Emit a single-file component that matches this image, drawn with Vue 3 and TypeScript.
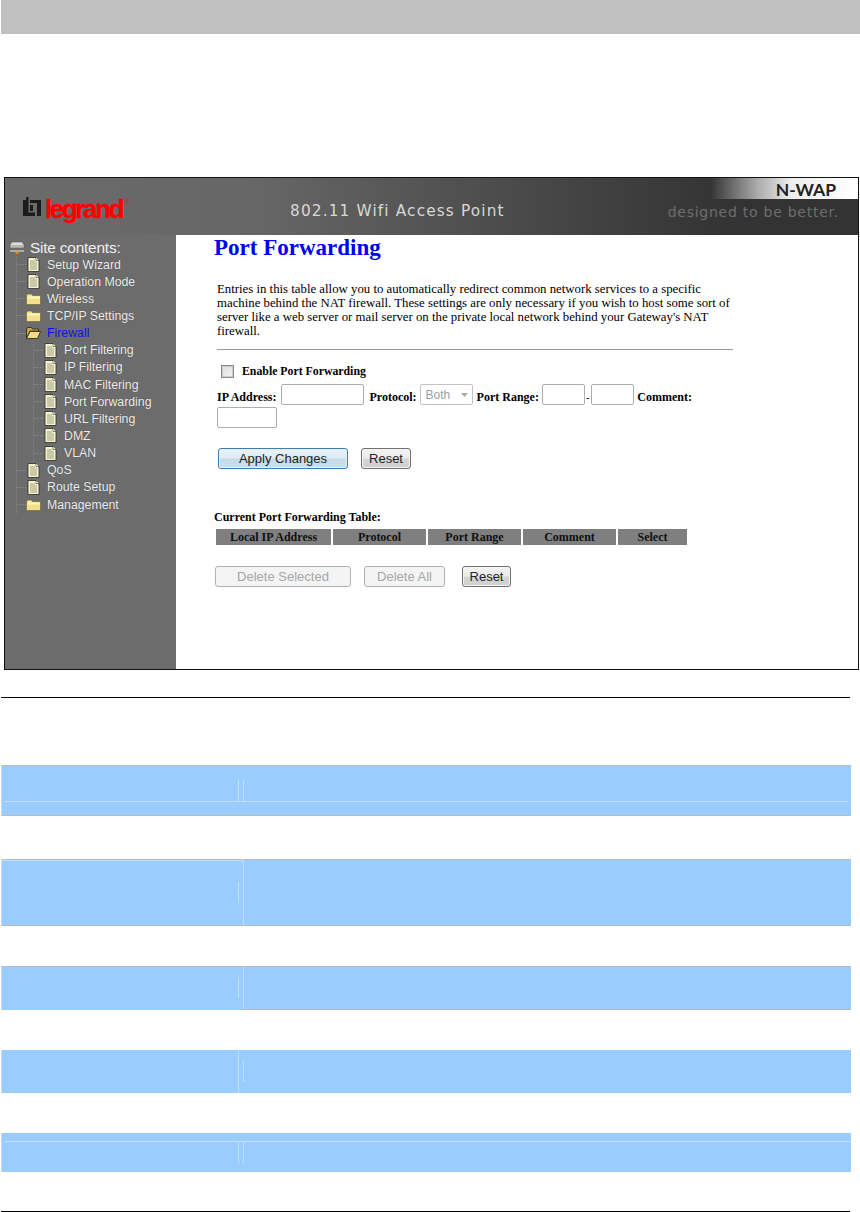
<script setup lang="ts">
interface NavItem { label: string; icon: 'doc' | 'folder' | 'open'; sub?: boolean; active?: boolean }
const nav: NavItem[] = [
  { label: 'Setup Wizard', icon: 'doc' },
  { label: 'Operation Mode', icon: 'doc' },
  { label: 'Wireless', icon: 'folder' },
  { label: 'TCP/IP Settings', icon: 'folder' },
  { label: 'Firewall', icon: 'open', active: true },
  { label: 'Port Filtering', icon: 'doc', sub: true },
  { label: 'IP Filtering', icon: 'doc', sub: true },
  { label: 'MAC Filtering', icon: 'doc', sub: true },
  { label: 'Port Forwarding', icon: 'doc', sub: true },
  { label: 'URL Filtering', icon: 'doc', sub: true },
  { label: 'DMZ', icon: 'doc', sub: true },
  { label: 'VLAN', icon: 'doc', sub: true },
  { label: 'QoS', icon: 'doc' },
  { label: 'Route Setup', icon: 'doc' },
  { label: 'Management', icon: 'folder' },
]
const cols = [
  { label: 'Local IP Address', w: 115 },
  { label: 'Protocol', w: 93 },
  { label: 'Port Range', w: 93 },
  { label: 'Comment', w: 93 },
  { label: 'Select', w: 69 },
]
interface Band { cls: string; lines: string[] }
const bands: Band[] = [
  { cls: 'b1', lines: ['h1', 'v1a', 'v1b'] },
  { cls: 'b2', lines: ['h2', 'v2a', 'v2b'] },
  { cls: 'b3', lines: ['v3a', 'v3b', 'u3'] },
  { cls: 'b4', lines: ['v4a', 'v4b'] },
  { cls: 'b5', lines: ['h5', 'v5a', 'v5b'] },
]
</script>

<template>
  <div class="page">
    <div class="topbar"></div>

    <div class="shot">
      <header class="head">
        <div class="logo">
          <svg class="mark" width="18" height="20" viewBox="0 0 18 20">
            <path d="M0 3h3V0h2.500v15.500H12V19H0z" fill="#1c1c1c" />
            <path d="M7 3h11v16h-4V6H7z" fill="#1c1c1c" />
            <path d="M7 8h3v6H7z" fill="#1c1c1c" />
          </svg>
          <span class="brand">legrand</span>
          <span class="reg">®</span>
        </div>
        <div class="product">802.11 Wifi Access Point</div>
        <div class="right">
          <div class="nwap">N-WAP</div>
          <div class="tag">designed to be better.</div>
        </div>
      </header>

      <div class="body">
        <aside class="side">
          <div class="site">
            <svg width="16" height="14" viewBox="0 0 16 14">
              <path d="M1 4l2-3h10l2 3v3H1z" fill="#dcdcd4" stroke="#555" stroke-width=".5" />
              <path d="M1 5h14M1 7h14" stroke="#777" stroke-width=".7" />
              <path d="M1 10h14" stroke="#d8d8c8" stroke-width="1.200" />
              <circle cx="8" cy="11.500" r="1.500" fill="#e89020" />
            </svg>
            <span>Site contents:</span>
          </div>
          <ul class="tree">
            <li v-for="n in nav" :key="n.label" class="node" :class="{ sub: n.sub }">
              <span class="dash"></span>
              <svg v-if="n.icon === 'doc'" class="ico" width="13" height="15" viewBox="0 0 13 15">
                <path d="M1 .5h8l3 3v11H1z" fill="#f6f2cc" stroke="#2a2a2a" stroke-width=".8" />
                <path d="M3 4h5M3 6h7M3 8h7M3 10h7M3 12h7" stroke="#8a8a70" stroke-width=".8" />
                <path d="M9 .5v3h3" fill="#fff" stroke="#333" stroke-width=".6" />
              </svg>
              <svg v-else-if="n.icon === 'folder'" class="ico" width="15" height="12" viewBox="0 0 15 12">
                <path d="M.5 2.500l1-1.500h4l1 1.500h8v9H.5z" fill="#f3df8c" stroke="#6a5c2c" stroke-width=".6" />
                <path d="M1.500 3.500h12v2h-12z" fill="#fcf4c4" />
              </svg>
              <svg v-else class="ico" width="15" height="12" viewBox="0 0 15 12">
                <path d="M.5 2l1-1.500h4l1 1.500h6v2H4L.5 11z" fill="#c8a848" stroke="#2a2410" stroke-width=".8" />
                <path d="M4 4.500h10.500l-3 7H.5z" fill="#f2dc88" stroke="#2a2410" stroke-width=".8" />
              </svg>
              <span class="label" :class="{ active: n.active }">{{ n.label }}</span>
            </li>
          </ul>
        </aside>

        <main class="main">
          <h1>Port Forwarding</h1>
          <p class="intro">
            Entries in this table allow you to automatically redirect common network services to a specific<br />
            machine behind the NAT firewall. These settings are only necessary if you wish to host some sort of<br />
            server like a web server or mail server on the private local network behind your Gateway's NAT<br />
            firewall.
          </p>
          <hr />
          <label class="enable">
            <span class="check"></span>
            <b>Enable Port Forwarding</b>
          </label>
          <div class="fields">
            <b>IP Address:</b>
            <input class="in ip" type="text" />
            <b class="gap">Protocol:</b>
            <span class="sel">Both<svg width="7" height="4" viewBox="0 0 7 4"><path d="M0 0h7L3.500 4z" fill="#aaa" /></svg></span>
            <b class="gap2">Port Range:</b>
            <input class="in port" type="text" />
            <span class="dashc">-</span>
            <input class="in port" type="text" />
            <b class="gap3">Comment:</b>
            <input class="in comment" type="text" />
          </div>
          <div class="apply">
            <button class="btn primary">Apply Changes</button>
            <button class="btn reset r1">Reset</button>
          </div>
          <div class="cap">Current Port Forwarding Table:</div>
          <div class="thead">
            <div v-for="c in cols" :key="c.label" class="th" :style="{ width: c.w + 'px' }">{{ c.label }}</div>
          </div>
          <div class="actions">
            <button class="btn off ds">Delete Selected</button>
            <button class="btn off da">Delete All</button>
            <button class="btn reset r2">Reset</button>
          </div>
        </main>
      </div>
    </div>

    <div class="rule r-top"></div>

    <div class="bands">
      <div v-for="b in bands" :key="b.cls" class="band" :class="b.cls">
        <i v-for="l in b.lines" :key="l" class="ln" :class="l"></i>
      </div>
    </div>

    <div class="rule r-bot"></div>
  </div>
</template>

<style scoped>
.page { width: 860px; height: 1212px; background: #fff; overflow: hidden; font-family: "Liberation Serif", serif; }
.topbar { height: 34px; margin-left: 1px; background: #c0c0c0; }

.shot { margin: 143px 0 0 4px; width: 855px; height: 493px; border: 1px solid #111; box-sizing: border-box; display: flex; flex-direction: column; background: #fff; }
.head { height: 57px; flex: none; display: flex; position: relative; background: linear-gradient(90deg, #6b6b6b 0%, #666 30%, #4a4a4a 60%, #333 85%, #333 100%); }
.logo { display: flex; align-items: center; margin: 17px 0 0 18px; height: 28px; gap: 4px; }
.mark { position: relative; top: -2px; flex: none; }
.brand { font-family: "Liberation Sans", sans-serif; font-weight: 700; font-size: 26px; letter-spacing: -2.400px; color: #f00; line-height: 28px; -webkit-text-stroke: .3px #f00; }
.reg { font-family: "Liberation Sans", sans-serif; font-size: 8px; color: #b03030; align-self: flex-start; margin: 2px 0 0 -2px; }
.product { position: absolute; left: 285px; top: 24px; font-family: "DejaVu Sans", sans-serif; font-size: 15.300px; letter-spacing: 1.150px; color: #d8d8d8; white-space: nowrap; }
.right { position: absolute; right: 0; top: 0; width: 148px; }
.nwap { height: 21px; padding-right: 22px; box-sizing: border-box; text-align: right; font-family: "Lato", sans-serif; font-weight: 700; font-size: 17.500px; line-height: 23px; color: #222; background: linear-gradient(90deg, #333 0%, #aaa 32%, #eee 55%, #fff 100%); }
.tag { margin-top: 5px; padding-right: 19px; display: flex; justify-content: flex-end; font-family: "DejaVu Sans", sans-serif; font-size: 14px; letter-spacing: .75px; color: #6e6e6e; white-space: nowrap; }

.body { flex: 1; display: flex; min-height: 0; }
.side { width: 171px; flex: none; background: #6c6c6c; box-sizing: border-box; padding-top: 4px; font-family: "Liberation Sans", sans-serif; color: #eee; position: relative; }
.site { display: flex; align-items: center; gap: 5px; padding-left: 4px; height: 18px; font-size: 15.400px; letter-spacing: -.2px; color: #f0f0f0; }
.tree { list-style: none; margin: -1px 0 0; padding: 0; position: relative; }
.tree::before { content: ""; position: absolute; left: 11px; top: 0; height: 258px; border-left: 1px dotted #828282; }
.node { height: 17.150px; display: flex; align-items: center; padding-left: 12px; font-size: 12.300px; position: relative; }
.node.sub { padding-left: 29px; }
.node.sub::before { content: ""; position: absolute; left: 28px; top: 0; height: 100%; border-left: 1px dotted #828282; }
.dash { width: 9px; border-top: 1px dotted #8a8a8a; flex: none; }
.ico { flex: none; width: 15px; margin-right: 6px; }
.label { white-space: nowrap; color: #ececec; text-shadow: 0 0 1px #444; }
.label.active { color: #1010f0; text-shadow: none; }

.main { flex: 1; padding: 0 0 0 40px; color: #000; font-size: 12px; min-width: 0; }
h1 { margin: 0; font-size: 23px; font-weight: 700; color: #0000f0; line-height: 26px; position: relative; left: -2px; }
.intro { margin: 21px 0 0 1px; white-space: nowrap; line-height: 14.100px; font-size: 12.800px; }
hr { margin: 11px 0 0 1px; width: 516px; height: 1px; border: 0; background: #999; }
.enable { display: flex; align-items: center; height: 14px; margin: 14px 0 0 5px; font-size: 11.800px; }
.check { width: 11px; height: 11px; border: 1px solid #8a8a8a; background: linear-gradient(135deg, #ddd, #f4f4f4); box-shadow: inset 0 0 0 1px #ccc; margin-right: 8px; flex: none; }
.fields { margin: 6px 0 0 1px; width: 516px; display: flex; flex-wrap: wrap; align-items: center; row-gap: 2px; }
.fields b { white-space: nowrap; line-height: 16px; padding-top: 5px; }
.in { box-sizing: border-box; height: 21px; border: 1px solid #abadb3; border-radius: 2px; background: #fff; padding: 0; margin: 0; outline: none; }
.ip { width: 83px; margin-left: 5px; }
.gap { margin-left: 5px; }
.sel { box-sizing: border-box; width: 53px; height: 21px; border: 1px solid #c4c4c4; border-radius: 2px; margin-left: 3px; padding-left: 5px; font-family: "Liberation Sans", sans-serif; font-size: 12px; color: #a0a0a0; display: flex; align-items: center; justify-content: space-between; padding-right: 4px; }
.gap2 { margin-left: 4px; }
.port { width: 43px; margin-left: 3px; }
.dashc { margin-left: 1px; margin-right: -1px; font-size: 10px; padding-top: 5px; }
.gap3 { margin-left: 3px; }
.comment { width: 60px; }

.btn { box-sizing: border-box; height: 21px; padding: 0; font-family: "Liberation Sans", sans-serif; font-size: 13px; line-height: 19px; border-radius: 3px; }
.apply { display: flex; margin: 20px 0 0 2px; }
.primary { width: 130px; color: #222; border: 1px solid #3c7fb1; background: linear-gradient(#eaf3fa 0%, #dfeaf3 48%, #c4dbea 52%, #c9dff0 100%); box-shadow: inset 0 0 0 1px #e4f0f9; }
.reset { color: #222; border: 1px solid #707070; background: linear-gradient(#f2f2f2 0%, #ebebeb 48%, #d6d6d6 52%, #cfcfcf 100%); box-shadow: inset 0 0 0 1px #f4f4f4; }
.r1 { width: 50px; margin-left: 13px; }
.cap { margin-top: 41px; margin-left: -2px; font-weight: 700; line-height: 14px; white-space: nowrap; }
.thead { display: flex; gap: 2px; margin: 5px 0 0 0; }
.th { height: 16px; flex: none; background: #7f7f7f; color: #111; font-weight: 700; text-align: center; line-height: 16px; }
.actions { display: flex; margin: 21px 0 0 -1px; }
.off { color: #a6a6a6; border: 1px solid #adb2b5; background: #f4f4f4; }
.ds { width: 136px; }
.da { width: 81px; margin-left: 13px; }
.r2 { width: 49px; margin-left: 17px; }

.rule { height: 1px; background: #000; margin-left: 1px; width: 849px; }
.r-top { margin-top: 27px; }
.bands { margin-top: 67px; display: flex; flex-direction: column; }
.band { position: relative; margin-left: 1px; width: 850px; background: #99ccff; box-sizing: border-box; border-left: 1px solid #c4ddf5; }
.b1 { height: 51px; border-top: 1px solid #bbb; border-bottom: 1px solid #bbb; }
.b2 { height: 67px; margin-top: 43px; border-top: 1px solid #bbb; border-bottom: 1px solid #bbb; }
.b3 { height: 44px; margin-top: 40px; border-top: 1px solid #bbb; }
.b4 { height: 43px; margin-top: 40px; }
.b5 { height: 39px; margin-top: 40px; }
.ln { position: absolute; background: #c4ddf8; display: block; }
.h1 { left: 3px; right: 3px; top: 35px; height: 1px; }
.v1a { left: 236px; top: 14px; width: 1px; height: 21px; }
.v1b { left: 241px; top: 14px; width: 1px; height: 21px; }
.h2 { left: 0; width: 241px; top: 0; height: 1px; }
.v2a { left: 236px; top: 22px; width: 1px; height: 21px; }
.v2b { left: 241px; top: 0; width: 1px; height: 65px; }
.v3a { left: 236px; top: 10px; width: 1px; height: 21px; }
.v3b { left: 241px; top: 0; width: 1px; height: 43px; }
.u3 { left: 240px; right: 0; bottom: 0; height: 1px; background: #bbb; }
.v4a { left: 236px; top: 0; width: 1px; height: 43px; }
.v4b { left: 241px; top: 11px; width: 1px; height: 21px; }
.h5 { left: 3px; right: 0; top: 8px; height: 1px; }
.v5a { left: 236px; top: 9px; width: 1px; height: 21px; }
.v5b { left: 241px; top: 9px; width: 1px; height: 21px; }
.r-bot { margin-top: 39px; }
</style>

<style>
html, body { margin: 0; padding: 0; background: #fff; }
</style>
